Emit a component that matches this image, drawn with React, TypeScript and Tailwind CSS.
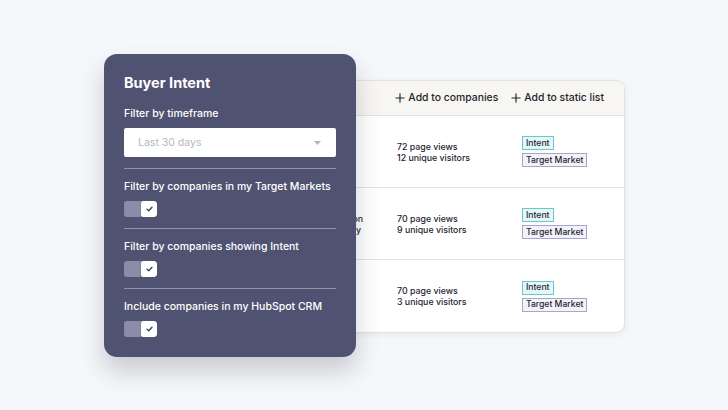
import React from "react";

const font = { fontFamily: "Inter, 'Noto Sans', sans-serif" };

function Toggle() {
  return (
    <div className="flex h-[16px] w-[33px] overflow-hidden rounded-[3px]">
      <div className="h-full w-[17px] bg-[#8b8da8]" />
      <div className="flex h-full w-[16px] items-center justify-center rounded-[2px] bg-white shadow-[0_1px_2px_rgba(0,0,0,0.25)]">
        <svg width="7" height="6" viewBox="0 0 7 6" fill="none">
          <path d="M1 3.2 L2.8 4.8 L6 1.2" stroke="#33475b" strokeWidth="1.3" strokeLinecap="round" strokeLinejoin="round" />
        </svg>
      </div>
    </div>
  );
}

function Section({ label }: { label: string }) {
  return (
    <div className="mt-[11px] flex flex-col">
      <div className="h-px w-full bg-[#9093ab]" />
      <div className="mt-[11px] h-[14px] text-[10.5px] leading-[14px] font-medium text-white">{label}</div>
      <div className="mt-[7px]">
        <Toggle />
      </div>
    </div>
  );
}

function Tag({ kind, children }: { kind: "intent" | "market"; children: React.ReactNode }) {
  const cls =
    kind === "intent"
      ? "border-[#6cc6cd] bg-[#e3f6f8]"
      : "border-[#a7a5cb] bg-[#f2f2f9]";
  return (
    <div className={`flex h-[14px] items-center border px-[3px] text-[8.6px] font-medium text-[#1f2530] ${cls}`}>
      {children}
    </div>
  );
}

function Plus() {
  return (
    <svg width="10" height="10" viewBox="0 0 10 10" fill="none">
      <path d="M5 0.5 V9.5 M0.5 5 H9.5" stroke="#1f2530" strokeWidth="1.2" />
    </svg>
  );
}

const rows = [
  { a: "", b: "", views: "72 page views", visitors: "12 unique visitors" },
  { a: "Higher Education", b: "Industry", views: "70 page views", visitors: "9 unique visitors" },
  { a: "", b: "", views: "70 page views", visitors: "3 unique visitors" },
];

export default function App() {
  return (
    <div className="relative h-[410px] w-[728px] overflow-hidden bg-[#f6f7fa]" style={font}>
      {/* companies table */}
      <div className="pl-[250px] pt-[80px]">
        <div className="w-[375px] overflow-hidden rounded-[9px] border border-[#e2e2e4] bg-white shadow-[0_2px_6px_rgba(40,45,70,0.08)]">
          <div className="flex h-[35px] items-center justify-end gap-[13px] border-b border-[#e2e2e4] bg-[#f7f6f2] pr-[20px] text-[10.4px] font-medium text-[#1f2530]">
            <span className="flex items-center gap-[3px]">
              <Plus />
              Add to companies
            </span>
            <span className="flex items-center gap-[3px]">
              <Plus />
              Add to static list
            </span>
          </div>
          {rows.map((r, i) => (
            <div
              key={i}
              className={`grid h-[72px] grid-cols-[113px_158px_1fr] items-center ${i < 2 ? "border-b border-[#e2e2e4]" : ""}`}
            >
              <div className="flex flex-col items-end whitespace-nowrap pr-[1px] text-[8.8px] leading-[11px] font-medium text-[#1f2530]">
                <span>{r.a}</span>
                <span className="pr-[2px]">{r.b}</span>
              </div>
              <div className="flex flex-col pl-[33px] text-[8.8px] leading-[11px] font-medium text-[#1f2530]">
                <span>{r.views}</span>
                <span>{r.visitors}</span>
              </div>
              <div className="flex flex-col items-start gap-[3px]">
                <Tag kind="intent">Intent</Tag>
                <Tag kind="market">Target Market</Tag>
              </div>
            </div>
          ))}
        </div>
      </div>

      {/* filter popover over the table */}
      <div className="absolute left-[104px] top-[54px] flex w-[252px] flex-col rounded-[13px] bg-[#4f5270] px-[20px] pb-[20px] pt-[20px] shadow-[0_14px_24px_rgba(40,45,70,0.22)]">
        <div className="h-[18px] text-[14.5px] leading-[18px] font-bold text-white">Buyer Intent</div>
        <div className="mt-[15px] h-[14px] text-[10.5px] leading-[14px] font-medium text-white">Filter by timeframe</div>
        <div className="mt-[7px] flex h-[29px] items-center justify-between rounded-[2px] bg-white pl-[14px] pr-[15px]">
          <span className="text-[10.5px] text-[#b4b7c3]">Last 30 days</span>
          <svg width="7" height="4" viewBox="0 0 7 4">
            <path d="M0 0 L7 0 L3.5 4 Z" fill="#b4b7c3" />
          </svg>
        </div>
        <Section label="Filter by companies in my Target Markets" />
        <Section label="Filter by companies showing Intent" />
        <Section label="Include companies in my HubSpot CRM" />
      </div>
    </div>
  );
}
